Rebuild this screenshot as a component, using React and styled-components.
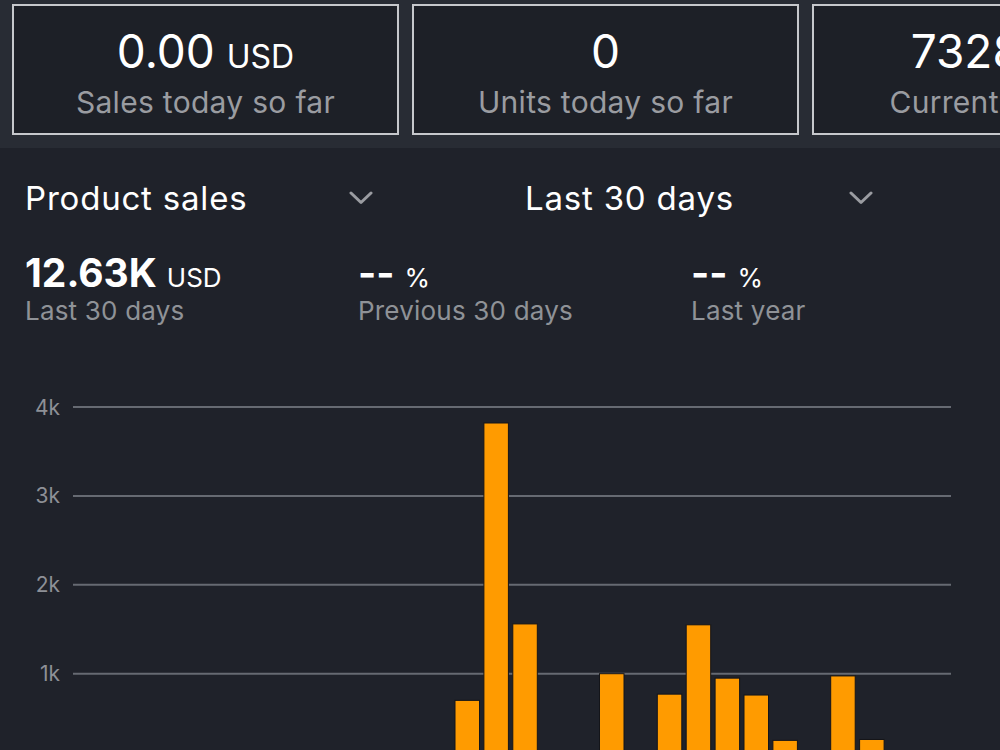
import React from 'react';
import styled, { createGlobalStyle } from 'styled-components';

const GlobalStyle = createGlobalStyle`
  html, body {
    margin: 0;
    padding: 0;
    background: #1f222a;
    overflow: hidden;
  }
  body {
    font-family: Inter, "Noto Sans", "Liberation Sans", sans-serif;
    color: #ffffff;
    -webkit-font-smoothing: antialiased;
  }
`;

const tiles = [
  { value: '0.00', unit: 'USD', label: 'Sales today so far' },
  { value: '0', label: 'Units today so far' },
  { value: '7328', unit: 'USD', label: 'Current balance' },
];

const stats = [
  { value: '12.63K', unit: 'USD', label: 'Last 30 days' },
  { value: '--', unit: '%', label: 'Previous 30 days' },
  { value: '--', unit: '%', label: 'Last year' },
];

// daily sales in thousands, index = day slot in the 30 day window
const daily = {
  13: 0.7,
  14: 3.82,
  15: 1.56,
  18: 1.0,
  20: 0.77,
  21: 1.55,
  22: 0.95,
  23: 0.76,
  24: 0.25,
  26: 0.975,
  27: 0.26,
};

const CHART_TOP = 66;
const STEP = 88.9;
const LINE_LEFT = 73;
const LINE_RIGHT = 951;
const SLOT_LEFT = 79.3;
const SLOT = 28.9;
const BAR_W = 24.5;

const SalesChart = () => {
  const zero = CHART_TOP + STEP * 4;
  return (
    <ChartSvg width="1000" height="410" viewBox="0 0 1000 410">
      {[4, 3, 2, 1].map((k) => {
        const y = zero - k * STEP;
        return (
          <g key={k}>
            <line x1={LINE_LEFT} x2={LINE_RIGHT} y1={y} y2={y} stroke="#666a72" strokeWidth="2" />
            <text x="60" y={y + 7.5} textAnchor="end" fill="#8d9096" fontSize="21">
              {k}k
            </text>
          </g>
        );
      })}
      {Object.entries(daily).map(([day, v]) => {
        const h = v * STEP;
        return (
          <rect
            key={day}
            x={SLOT_LEFT + Number(day) * SLOT}
            y={zero - h}
            width={BAR_W}
            height={h}
            fill="#ff9b00"
            stroke="#141519"
            strokeWidth="1"
          />
        );
      })}
    </ChartSvg>
  );
};

const Chevron = () => (
  <svg width="24" height="14" viewBox="0 0 24 14">
    <polyline points="2,2 12,11.5 22,2" fill="none" stroke="#9a9ca1" strokeWidth="3" strokeLinecap="round" strokeLinejoin="round" />
  </svg>
);

const App = () => (
  <Page>
    <GlobalStyle />
    <TileStrip>
      {tiles.map((t) => (
        <Tile key={t.label}>
          <TileValue>
            {t.value}
            {t.unit && <TileUnit>{t.unit}</TileUnit>}
          </TileValue>
          <TileLabel>{t.label}</TileLabel>
        </Tile>
      ))}
    </TileStrip>

    <Selectors>
      <Dropdown>
        <span>Product sales</span>
        <Chevron />
      </Dropdown>
      <Dropdown>
        <span>Last 30 days</span>
        <Chevron />
      </Dropdown>
    </Selectors>

    <StatRow>
      {stats.map((s) => (
        <Stat key={s.label}>
          <StatValue>
            {s.value}
            <StatUnit>{s.unit}</StatUnit>
          </StatValue>
          <StatLabel>{s.label}</StatLabel>
        </Stat>
      ))}
    </StatRow>

    <SalesChart />
  </Page>
);

const Page = styled.div`
  width: 1000px;
  height: 750px;
  overflow: hidden;
  background: #1f222a;
`;

const TileStrip = styled.div`
  display: flex;
  gap: 13px;
  height: 148px;
  box-sizing: border-box;
  padding: 4px 0 0 12px;
  background: #282c34;
  overflow: hidden;
`;

const Tile = styled.div`
  flex: 0 0 387px;
  height: 131px;
  box-sizing: border-box;
  border: 2px solid #c6c8cc;
  background: #1d2027;
  display: flex;
  flex-direction: column;
  align-items: center;
  padding-top: 20px;
`;

const TileValue = styled.div`
  font-size: 46px;
  line-height: 50px;
  color: #ffffff;
  white-space: nowrap;
`;

const TileUnit = styled.span`
  font-size: 32px;
  line-height: 1;
  margin-left: 12px;
`;

const TileLabel = styled.div`
  margin-top: 9px;
  font-size: 30px;
  line-height: 34px;
  letter-spacing: 0.3px;
  color: #9a9ca1;
  white-space: nowrap;
`;

const Selectors = styled.div`
  display: grid;
  grid-template-columns: 500px 500px;
  margin-top: 30px;
`;

const Dropdown = styled.div`
  width: 348px;
  padding-left: 25px;
  display: flex;
  align-items: center;
  justify-content: space-between;
  font-size: 33px;
  line-height: 40px;
  letter-spacing: 0.8px;
  color: #ffffff;
`;

const StatRow = styled.div`
  display: grid;
  grid-template-columns: repeat(3, 333px);
  padding-left: 25px;
  margin-top: 33px;
`;

const Stat = styled.div`
  display: flex;
  flex-direction: column;
`;

const StatValue = styled.div`
  font-size: 39px;
  line-height: 44px;
  font-weight: 700;
  color: #ffffff;
`;

const StatUnit = styled.span`
  font-size: 26px;
  line-height: 1;
  font-weight: 400;
  margin-left: 10px;
`;

const StatLabel = styled.div`
  margin-top: 1px;
  font-size: 26px;
  line-height: 30px;
  letter-spacing: 0.2px;
  color: #8f9297;
`;

const ChartSvg = styled.svg`
  display: block;
  margin-top: 15px;
  font-family: Inter, "Liberation Sans", sans-serif;
`;

export default App;
